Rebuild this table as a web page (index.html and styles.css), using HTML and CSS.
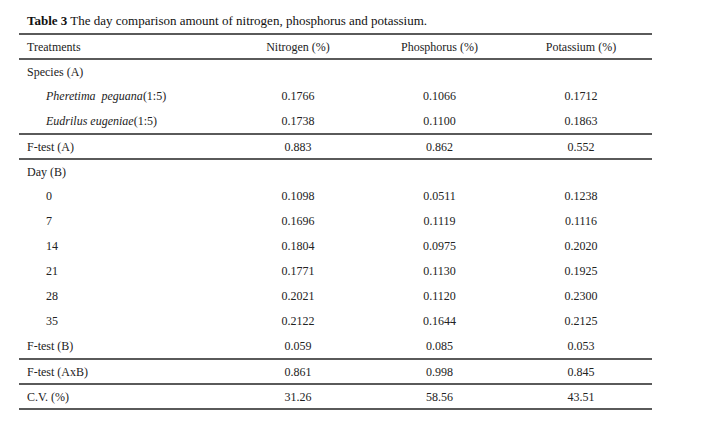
FILE: index.html
```html
<!DOCTYPE html>
<html>
<head>
<meta charset="utf-8">
<link rel="stylesheet" href="styles.css">
</head>
<body>
<div class="page">
  <p class="title"><b>Table 3</b> The day comparison amount of nitrogen, phosphorus and potassium.</p>
  <div class="table">
    <div class="row rule">
      <div class="c1">Treatments</div><div>Nitrogen (%)</div><div>Phosphorus (%)</div><div>Potassium (%)</div>
    </div>
    <div class="row rule">
      <div class="c1">Species (A)</div><div></div><div></div><div></div>
    </div>
    <div class="row">
      <div class="c1 ind"><i>Pheretima&nbsp; peguana</i>(1:5)</div><div>0.1766</div><div>0.1066</div><div>0.1712</div>
    </div>
    <div class="row">
      <div class="c1 ind"><i>Eudrilus eugeniae</i>(1:5)</div><div>0.1738</div><div>0.1100</div><div>0.1863</div>
    </div>
    <div class="row rule">
      <div class="c1">F-test (A)</div><div>0.883</div><div>0.862</div><div>0.552</div>
    </div>
    <div class="row rule">
      <div class="c1">Day (B)</div><div></div><div></div><div></div>
    </div>
    <div class="row">
      <div class="c1 ind">0</div><div>0.1098</div><div>0.0511</div><div>0.1238</div>
    </div>
    <div class="row">
      <div class="c1 ind">7</div><div>0.1696</div><div>0.1119</div><div>0.1116</div>
    </div>
    <div class="row">
      <div class="c1 ind">14</div><div>0.1804</div><div>0.0975</div><div>0.2020</div>
    </div>
    <div class="row">
      <div class="c1 ind">21</div><div>0.1771</div><div>0.1130</div><div>0.1925</div>
    </div>
    <div class="row">
      <div class="c1 ind">28</div><div>0.2021</div><div>0.1120</div><div>0.2300</div>
    </div>
    <div class="row">
      <div class="c1 ind">35</div><div>0.2122</div><div>0.1644</div><div>0.2125</div>
    </div>
    <div class="row">
      <div class="c1">F-test (B)</div><div>0.059</div><div>0.085</div><div>0.053</div>
    </div>
    <div class="row rule">
      <div class="c1">F-test (AxB)</div><div>0.861</div><div>0.998</div><div>0.845</div>
    </div>
    <div class="row rule bottom">
      <div class="c1">C.V. (%)</div><div>31.26</div><div>58.56</div><div>43.51</div>
    </div>
  </div>
</div>
</body>
</html>
```

FILE: styles.css
```css
html, body {
  margin: 0;
  padding: 0;
  background: #ffffff;
}
body {
  font-family: "Liberation Serif", "Times New Roman", serif;
  color: #222222;
}
.page {
  padding: 13px 0 0 19px;
}
.title {
  margin: 0;
  padding-left: 8px;
  font-size: 13px;
  line-height: 16px;
  height: 20px;
  color: #111111;
}
.title b {
  font-weight: bold;
}
.table {
  width: 633px;
  font-size: 12px;
}
.row {
  display: grid;
  grid-template-columns: 208px 142px 141px 142px;
  height: 25px;
  align-items: center;
  box-sizing: border-box;
}
.row > div {
  text-align: center;
  line-height: 14px;
  padding-top: 1px;
}
.row > .c1 {
  text-align: left;
  padding-left: 8px;
}
.row > .c1.ind {
  padding-left: 27px;
}
.rule {
  border-top: 2px solid #5a5a5a;
}
.bottom {
  border-bottom: 2px solid #5a5a5a;
  height: 27px;
}
```
